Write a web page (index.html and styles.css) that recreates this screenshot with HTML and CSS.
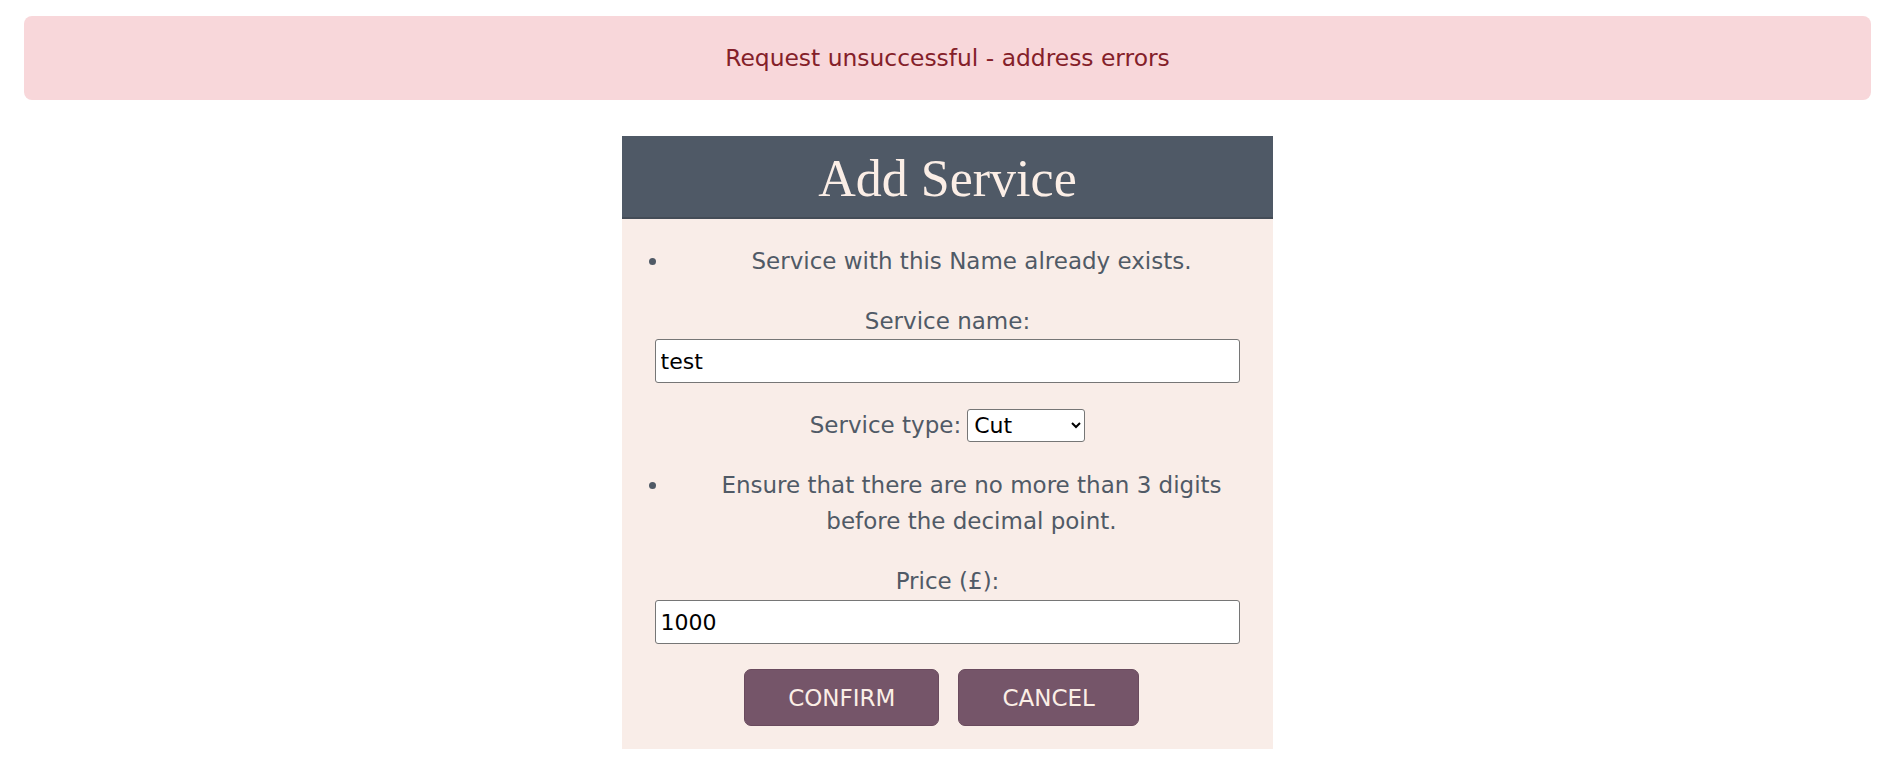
FILE: index.html
```html
<!DOCTYPE html>
<html lang="en">
<head>
<meta charset="utf-8">
<title>Add Service</title>
<link rel="stylesheet" href="styles.css">
</head>
<body>
<div class="page">
  <div class="alert">Request unsuccessful - address errors</div>
  <div class="card">
    <div class="card-header"><h1 class="card-title">Add Service</h1></div>
    <form class="card-body">
      <ul class="errors"><li>Service with this Name already exists.</li></ul>
      <div class="field">
        <label class="field-label" for="name">Service name:</label>
        <input class="text-input" id="name" type="text" value="test">
      </div>
      <div class="select-row">
        <label class="field-label" for="type">Service type:</label>
        <select class="select" id="type"><option>Cut</option><option>Colour</option><option>Style</option></select>
      </div>
      <ul class="errors"><li>Ensure that there are no more than 3 digits before the decimal point.</li></ul>
      <div class="field">
        <label class="field-label price-label" for="price">Price (£):</label>
        <input class="text-input" id="price" type="text" value="1000">
      </div>
      <div class="actions">
        <button class="btn" type="button">CONFIRM</button>
        <button class="btn" type="button">CANCEL</button>
      </div>
    </form>
  </div>
</div>
</body>
</html>
```

FILE: styles.css
```css
html, body {
  margin: 0;
  padding: 0;
  background: #ffffff;
}

body {
  font-family: "DejaVu Sans", "Noto Sans", sans-serif;
  color: #505a66;
}

.page {
  padding: 16px 24px 0;
  display: flex;
  flex-direction: column;
  align-items: center;
}

.alert {
  align-self: stretch;
  background: #f8d7da;
  color: #842029;
  border-radius: 8px;
  padding: 24px;
  font-size: 23.4px;
  line-height: 36px;
  text-align: center;
  margin-bottom: 36px;
}

.card {
  width: 651px;
  background: #f9ede8;
}

.card-header {
  background: #4f5966;
  border-bottom: 2px solid #444c57;
  padding-top: 5px;
  text-align: center;
}

.card-title {
  margin: 0;
  font-family: "Liberation Serif", "DejaVu Serif", serif;
  font-weight: 400;
  font-size: 52px;
  line-height: 76px;
  color: #fbeee6;
}

.card-body {
  display: flex;
  flex-direction: column;
  gap: 24px;
  padding: 24px 0 23px;
  font-size: 23px;
  line-height: 36px;
}

.errors {
  margin: 0;
  padding: 0 0 0 48px;
  list-style: disc;
  text-align: center;
}

.errors li {
  padding: 0 12px;
}

.field {
  display: flex;
  flex-direction: column;
  align-items: center;
}

.field-label {
  display: block;
  text-align: center;
}

.price-label {
  margin-bottom: 1px;
}

.text-input {
  box-sizing: border-box;
  width: 90%;
  height: 44px;
  margin: 0;
  padding: 0 5px;
  border: 1px solid #767676;
  border-radius: 3px;
  background: #ffffff;
  color: #000000;
  font-family: "DejaVu Sans", "Noto Sans", sans-serif;
  font-size: 22px;
}

.select-row {
  display: flex;
  justify-content: center;
  align-items: center;
  gap: 6px;
  height: 36px;
}

.select {
  box-sizing: border-box;
  width: 118px;
  height: 33px;
  margin: 0;
  padding: 0 2px;
  border: 1px solid #767676;
  border-radius: 3px;
  background: #ffffff;
  color: #000000;
  font-family: "DejaVu Sans", "Noto Sans", sans-serif;
  font-size: 22px;
}

.actions {
  display: flex;
  justify-content: center;
  gap: 19px;
  padding-right: 12px;
  margin-top: 1px;
}

.btn {
  height: 57px;
  padding: 0 43px;
  border: 1px solid #6a4b5e;
  border-radius: 7px;
  background: #755569;
  color: #fbeee6;
  font-family: "DejaVu Sans", "Noto Sans", sans-serif;
  font-size: 23px;
  cursor: pointer;
}
```
